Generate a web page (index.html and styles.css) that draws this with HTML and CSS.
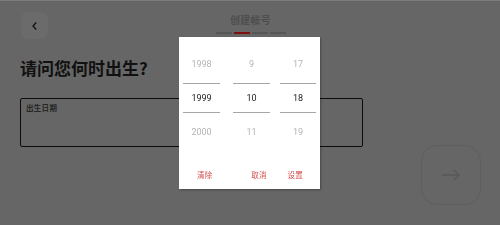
FILE: index.html
```html
<!DOCTYPE html>
<html lang="zh-CN">
<head>
<meta charset="utf-8">
<title>创建帐号</title>
<link rel="stylesheet" href="styles.css">
</head>
<body>
<div class="page">
  <header class="header">
    <button class="back" aria-label="返回">
      <svg width="10" height="10" viewBox="0 0 10 10"><path d="M6.2 1.5 L3 5 L6.2 8.5" fill="none" stroke="#111" stroke-width="1.3"/></svg>
    </button>
    <div class="title-block">
      <div class="title">创建帐号</div>
      <div class="progress">
        <span class="seg"></span>
        <span class="seg active"></span>
        <span class="seg"></span>
        <span class="seg"></span>
      </div>
    </div>
  </header>
  <h1 class="heading">请问您何时出生?</h1>
  <div class="field">
    <div class="label">出生日期</div>
  </div>
  <div class="next-row">
    <button class="next" aria-label="下一步">
      <svg width="20" height="12" viewBox="0 0 20 12"><path d="M1 6 H18 M13 1 L18 6 L13 11" fill="none" stroke="#585858" stroke-width="1.4"/></svg>
    </button>
  </div>
</div>

<div class="overlay">
  <div class="dialog">
    <div class="columns">
      <div class="col c1">
        <div class="item">1998</div>
        <div class="item sel">1999</div>
        <div class="item">2000</div>
      </div>
      <div class="col c2">
        <div class="item">9</div>
        <div class="item sel">10</div>
        <div class="item">11</div>
      </div>
      <div class="col c3">
        <div class="item">17</div>
        <div class="item sel">18</div>
        <div class="item">19</div>
      </div>
    </div>
    <div class="actions">
      <span class="btn">清除</span>
      <div class="group">
        <span class="btn">取消</span>
        <span class="btn">设置</span>
      </div>
    </div>
  </div>
</div>
</body>
</html>
```
FILE: styles.css
```css
* { box-sizing: border-box; }
html, body { margin: 0; padding: 0; }
body {
  width: 500px;
  height: 225px;
  overflow: hidden;
  background: #666666;
  border-top: 1px solid #7c7c7c;
  font-family: "Noto Sans CJK SC", "Noto Sans", sans-serif;
  position: relative;
}
.page {
  padding: 11px 19px 0 20px;
}
.header {
  display: grid;
  grid-template-columns: 1fr auto 1fr;
  align-items: start;
}
.back {
  width: 27px;
  height: 27px;
  margin-left: 1px;
  border: none;
  border-radius: 7px;
  background: #6b6b6b;
  display: flex;
  align-items: center;
  justify-content: center;
  padding: 0;
  justify-self: start;
}
.title-block {
  display: flex;
  flex-direction: column;
  align-items: center;
  padding-top: 2px;
}
.title {
  font-size: 10px;
  line-height: 12px;
  font-weight: 700;
  color: #4e4e4e;
  letter-spacing: 0.3px;
}
.progress {
  display: flex;
  gap: 2px;
  margin-top: 6px;
}
.seg {
  width: 16px;
  height: 1.5px;
  background: #565656;
}
.seg.active { background: #7c1010; }
.heading {
  margin: 18px 0 0 0;
  font-size: 17px;
  line-height: 22px;
  font-weight: 700;
  color: #111;
}
.field {
  margin-top: 19px;
  width: 343px;
  height: 49px;
  border: 1.5px solid #0c0c0c;
  border-radius: 2px;
  padding: 4px 5px;
}
.label {
  font-size: 7.5px;
  line-height: 10px;
  font-weight: 700;
  color: #262626;
  letter-spacing: 0.3px;
}
.next-row {
  display: flex;
  justify-content: flex-end;
  margin-top: -2px;
}
.next {
  width: 60px;
  height: 60px;
  border: 1px solid #5e5e5e;
  border-radius: 16px;
  background: transparent;
  display: flex;
  align-items: center;
  justify-content: center;
  padding: 0;
}
.overlay {
  position: fixed;
  inset: 0;
  display: flex;
  align-items: center;
  justify-content: center;
}
.dialog {
  width: 141px;
  height: 152px;
  margin-right: 1px;
  background: #fff;
  box-shadow: 1px 1px 2px rgba(0,0,0,0.3);
  padding: 10px 4px 0 4px;
  font-family: Roboto, "Noto Sans", sans-serif;
}
.columns {
  display: flex;
}
.col {
  display: flex;
  flex-direction: column;
}
.c1 { width: 37px; }
.c2 { width: 37px; margin-left: 13px; }
.c3 { width: 36px; margin-left: 10px; }
.item {
  height: 34px;
  display: flex;
  align-items: center;
  justify-content: center;
  font-size: 9px;
  color: #b4b4b4;
}
.item.sel {
  height: 30px;
  margin: 2px 0;
  border-top: 1.5px solid #a6a6a6;
  border-bottom: 1.5px solid #a6a6a6;
  color: #222;
}
.actions {
  margin-top: 18px;
  height: 16px;
  display: flex;
  align-items: center;
  justify-content: space-between;
  padding: 0 13px 0 14px;
}
.group {
  display: flex;
  gap: 21px;
}
.btn {
  font-family: "Noto Sans CJK SC", sans-serif;
  font-size: 7.5px;
  color: #d14c4c;
  letter-spacing: 0.2px;
}
```
